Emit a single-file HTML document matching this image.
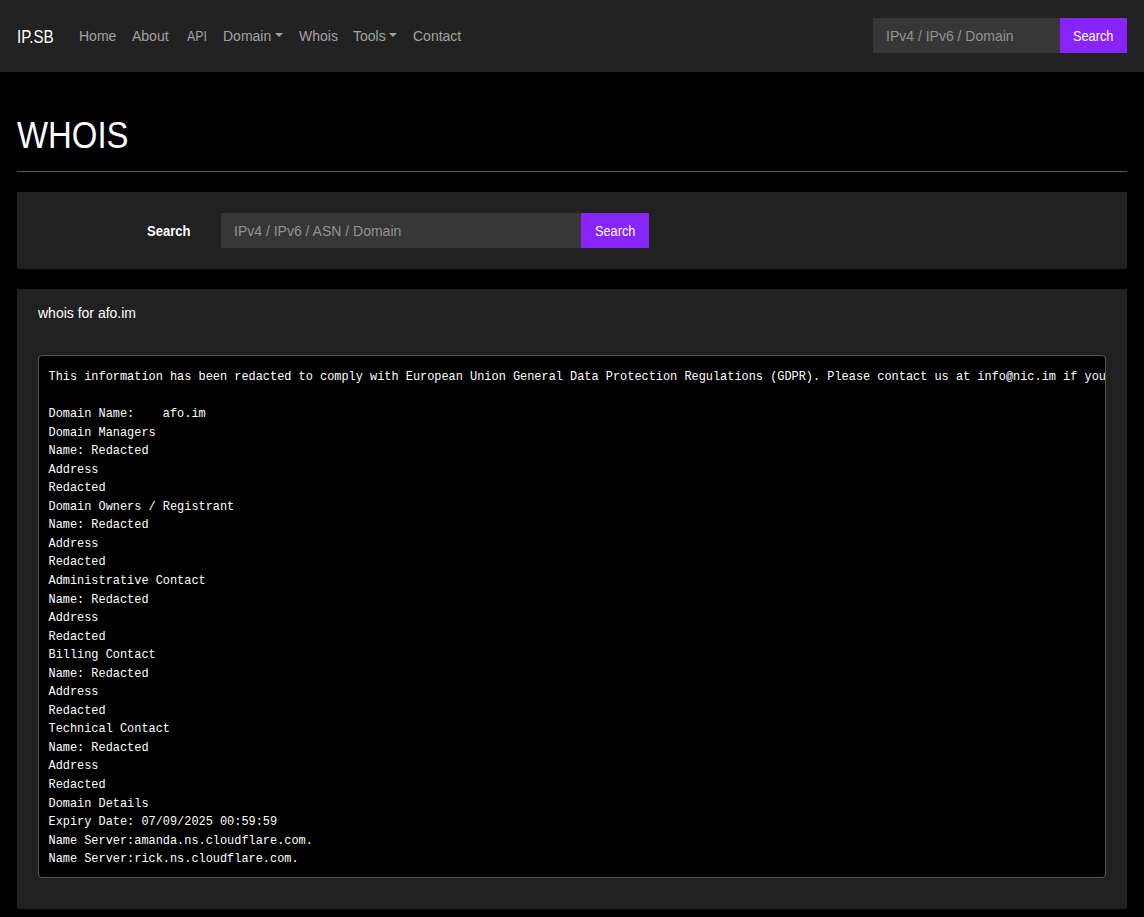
<!DOCTYPE html>
<html>
<head>
<meta charset="utf-8">
<style>
html,body{margin:0;padding:0;}
body{background:#000;width:1144px;height:917px;overflow:hidden;position:relative;font-family:"Liberation Sans",sans-serif;color:#fff;}
.abs{position:absolute;white-space:nowrap;}
.nav{position:absolute;left:0;top:0;width:1144px;height:72px;background:#222;}
.brand{font-size:18px;color:#fff;}
.lnk{font-size:14px;color:#a2a2a2;}
.caret{position:absolute;width:0;height:0;border-left:4px solid transparent;border-right:4px solid transparent;border-top:4px solid #a2a2a2;}
.inp{position:absolute;background:#373737;}
.btn{position:absolute;background:#8724fa;color:#fff;font-size:14px;}
.ph{font-size:14px;color:#939393;}
.h1{font-size:37px;color:#fff;}
.hr{position:absolute;left:17px;top:171px;width:1110px;height:1px;background:#555;}
.card{position:absolute;background:#212121;}
.pre{position:absolute;left:38px;top:355px;width:1066px;height:521px;background:#000;border:1px solid #555;border-radius:4px;overflow:hidden;}
.pre pre{margin:0;position:absolute;left:9.5px;top:12px;font-family:"Liberation Mono",monospace;font-size:11.925px;line-height:18.54px;color:#fff;}
</style>
</head>
<body>
<div class="nav">
  <div class="abs brand" style="left:17px;top:27px;transform:scaleX(0.84);transform-origin:0 0;">IP.SB</div>
  <div class="abs lnk" style="left:79px;top:28px;">Home</div>
  <div class="abs lnk" style="left:132px;top:28px;">About</div>
  <div class="abs lnk" style="left:187px;top:28px;transform:scaleX(0.88);transform-origin:0 0;">API</div>
  <div class="abs lnk" style="left:223px;top:28px;">Domain</div>
  <div class="caret" style="left:275px;top:33px;"></div>
  <div class="abs lnk" style="left:299px;top:28px;">Whois</div>
  <div class="abs lnk" style="left:353px;top:28px;">Tools</div>
  <div class="caret" style="left:389px;top:33px;"></div>
  <div class="abs lnk" style="left:413px;top:28px;">Contact</div>
  <div class="inp" style="left:873px;top:18px;width:187px;height:35px;"></div>
  <div class="abs ph" style="left:886px;top:28px;">IPv4 / IPv6 / Domain</div>
  <div class="btn" style="left:1060px;top:18px;width:67px;height:35px;"></div>
  <div class="abs" style="left:1073px;top:28px;font-size:14px;color:#fff;transform:scaleX(0.91);transform-origin:0 0;">Search</div>
</div>

<div class="abs h1" style="left:17px;top:115px;transform:scaleX(0.89);transform-origin:0 0;">WHOIS</div>
<div class="hr"></div>

<div class="card" style="left:17px;top:192px;width:1110px;height:77px;"></div>
<div class="abs" style="left:147px;top:223px;font-size:14px;font-weight:bold;transform:scaleX(0.93);transform-origin:0 0;">Search</div>
<div class="inp" style="left:221px;top:213px;width:360px;height:35px;"></div>
<div class="abs ph" style="left:234px;top:223px;">IPv4 / IPv6 / ASN / Domain</div>
<div class="btn" style="left:581px;top:213px;width:68px;height:35px;"></div>
<div class="abs" style="left:595px;top:223px;font-size:14px;color:#fff;transform:scaleX(0.91);transform-origin:0 0;">Search</div>

<div class="card" style="left:17px;top:289px;width:1110px;height:620px;"></div>
<div class="abs" style="left:38px;top:305px;font-size:14px;">whois for afo.im</div>
<div class="pre"><pre>This information has been redacted to comply with European Union General Data Protection Regulations (GDPR). Please contact us at info@nic.im if you wish to contact the registrant.

Domain Name:    afo.im
Domain Managers
Name: Redacted
Address
Redacted
Domain Owners / Registrant
Name: Redacted
Address
Redacted
Administrative Contact
Name: Redacted
Address
Redacted
Billing Contact
Name: Redacted
Address
Redacted
Technical Contact
Name: Redacted
Address
Redacted
Domain Details
Expiry Date: 07/09/2025 00:59:59
Name Server:amanda.ns.cloudflare.com.
Name Server:rick.ns.cloudflare.com.</pre></div>
</body>
</html>
